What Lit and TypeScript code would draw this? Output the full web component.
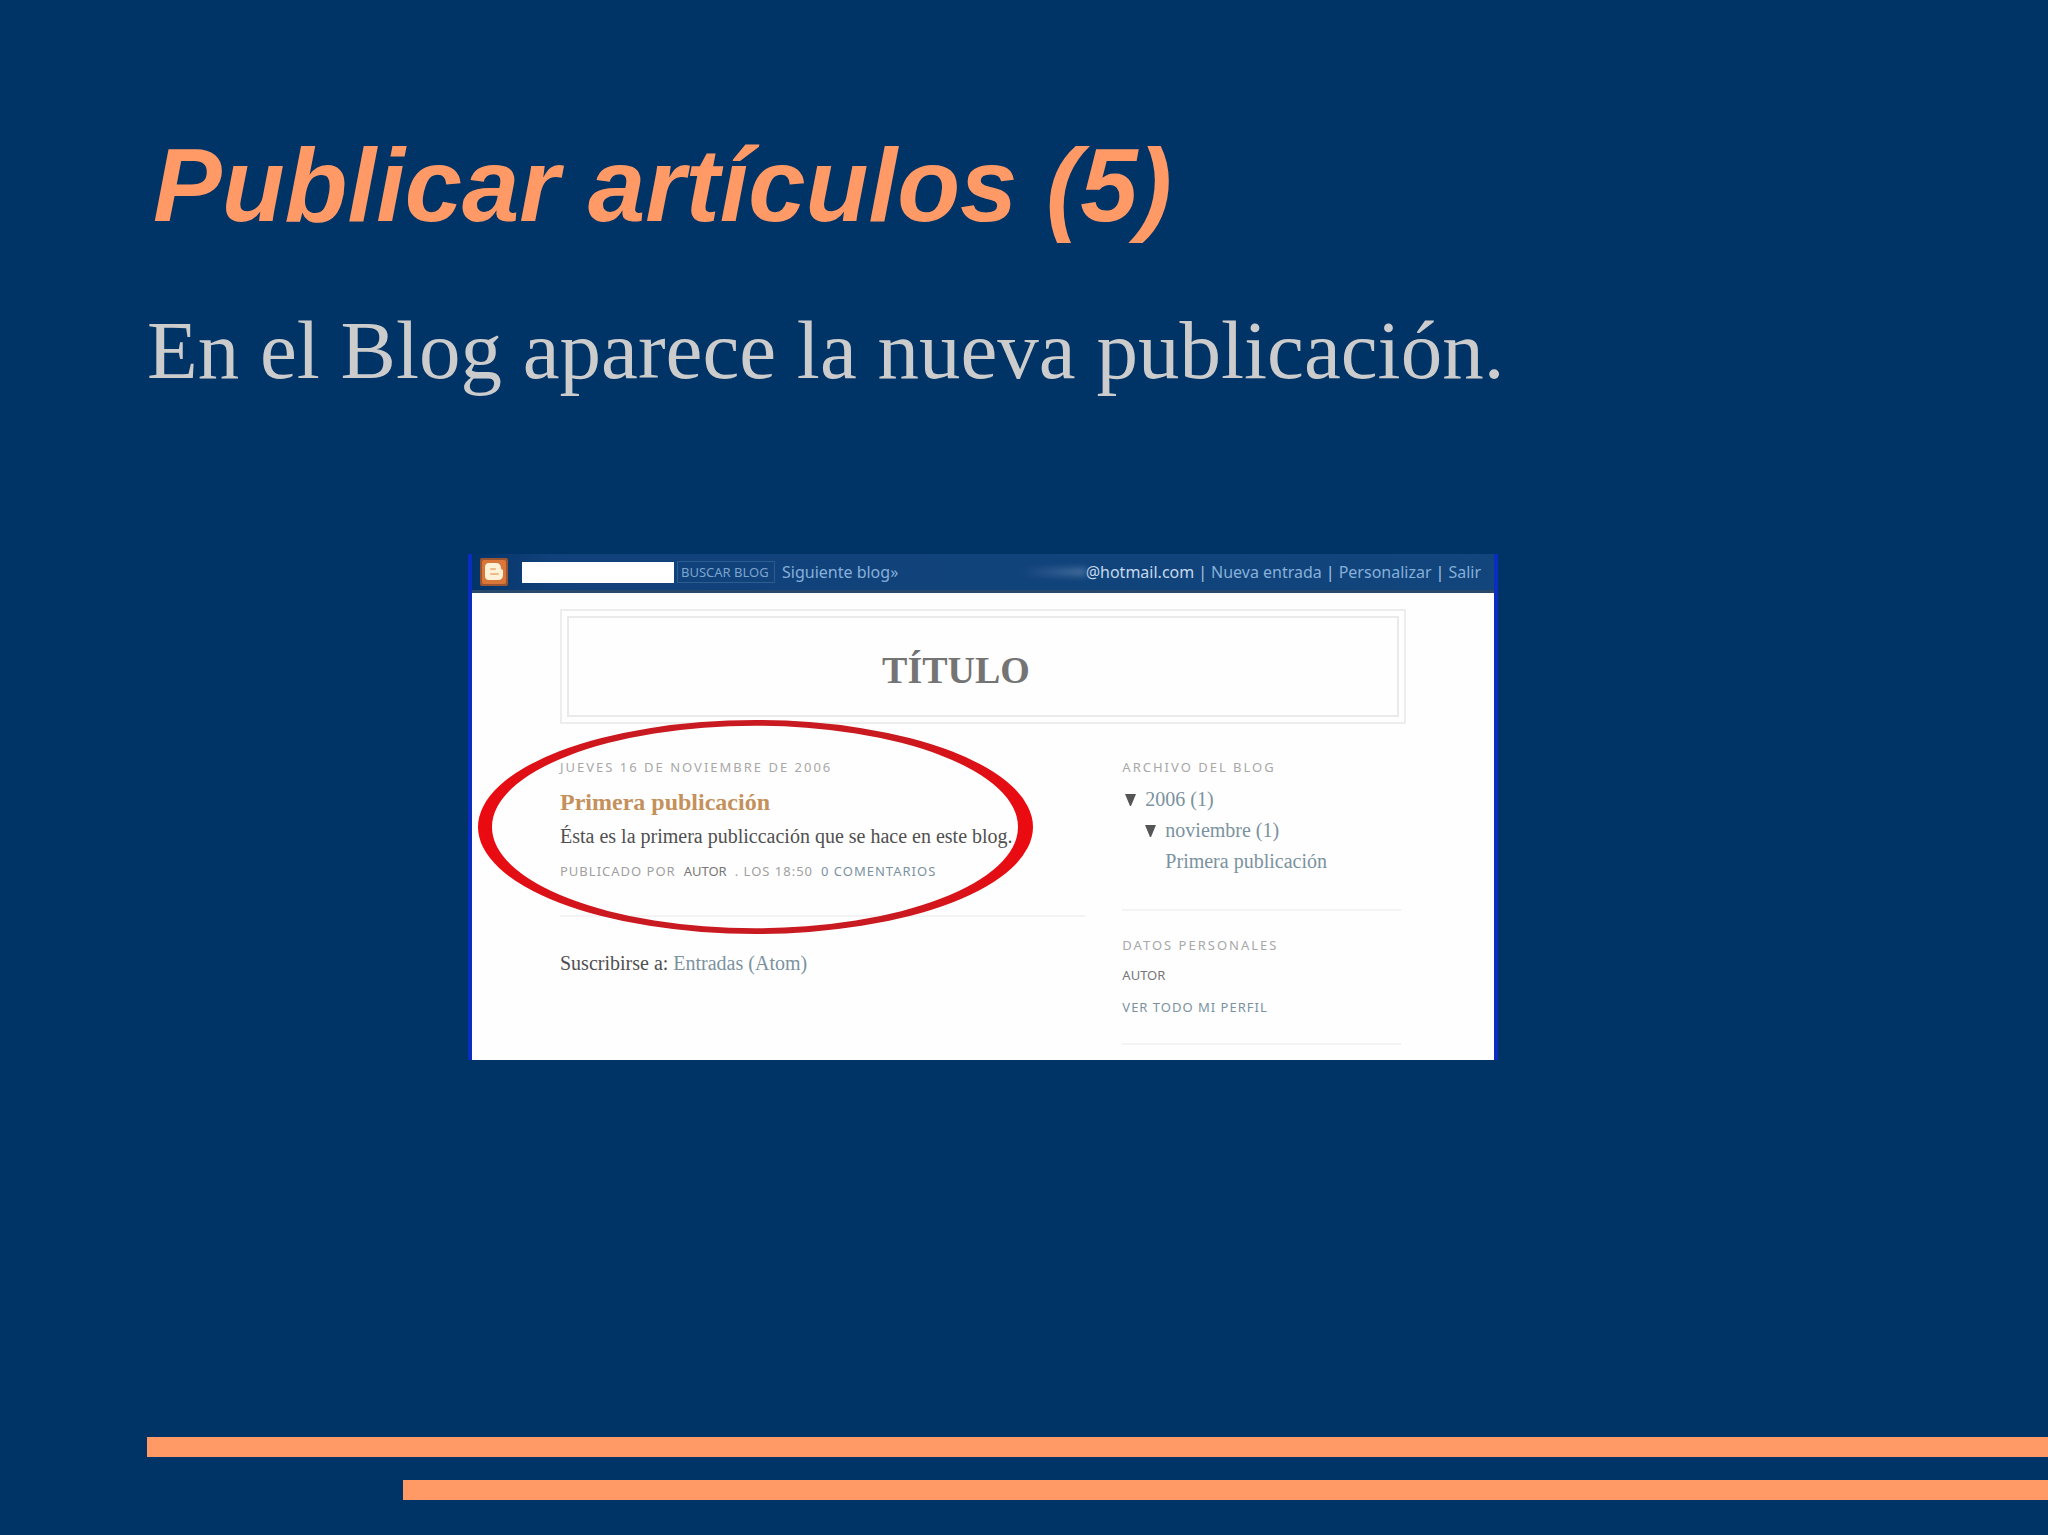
import { LitElement, html, css } from "lit";
import { customElement } from "lit/decorators.js";

@customElement("blog-navbar")
class BlogNavbar extends LitElement {
  static styles = css`
    :host { display: block; }
    .bar {
      box-sizing: border-box;
      height: 39px;
      display: flex;
      align-items: center;
      padding: 0 13px 0 8px;
      background: linear-gradient(90deg, #033468 0, #11417a 80px, #11457c 100%);
      border-bottom: 3px solid #29496b;
      font: 16px/20px "Noto Sans", sans-serif;
      color: #86b0da;
    }
    .logo { width: 28px; height: 28px; margin-right: 14px; flex: none; }
    .search { display: flex; align-items: center; gap: 3px; }
    .field {
      box-sizing: border-box;
      width: 152px;
      height: 21px;
      padding: 0 4px;
      border: 0;
      background: #fff;
      font: inherit;
    }
    .go {
      box-sizing: border-box;
      width: 98px;
      height: 22px;
      padding: 0 3px;
      border: 1px solid #2d5c90;
      background: none;
      color: #7ba4cf;
      font: 13px/20px "Noto Sans", sans-serif;
      text-align: left;
      white-space: nowrap;
    }
    a { color: inherit; text-decoration: none; }
    .next { margin-left: 7px; }
    .user { display: flex; align-items: center; gap: 4px; margin-left: auto; }
    .mail { display: flex; align-items: center; color: #c5d9ee; }
    .hidden-name {
      width: 64px;
      height: 8px;
      background: linear-gradient(90deg, transparent, #4a71a0);
      filter: blur(3px);
    }
    .sep { color: #a9c6e4; }
  `;

  render() {
    return html`
      <nav class="bar">
        <svg class="logo" viewBox="0 0 28 28" aria-hidden="true">
          <rect width="28" height="28" rx="2" fill="#9a5432" />
          <rect x="2" y="2" width="24" height="24" rx="2" fill="#d9773a" />
          <path fill="#fff0d8" d="M9 5h7c3 0 5 2 5 5 0 1 1 2 2 2v5c0 3-2 5-5 5H9c-3 0-4-2-4-4V9c0-2 1-4 4-4z" />
          <path d="M11 11h4M11 16h7" stroke="#f0b988" stroke-width="2" stroke-linecap="round" />
        </svg>
        <form class="search" @submit=${(e: Event) => e.preventDefault()}>
          <input class="field" type="text" aria-label="Buscar" />
          <button class="go" type="submit">BUSCAR BLOG</button>
        </form>
        <a class="next" href="#">Siguiente blog»</a>
        <div class="user">
          <span class="mail"><span class="hidden-name"></span>@hotmail.com</span>
          <span class="sep">|</span>
          <a href="#">Nueva entrada</a>
          <span class="sep">|</span>
          <a href="#">Personalizar</a>
          <span class="sep">|</span>
          <a href="#">Salir</a>
        </div>
      </nav>
    `;
  }
}

@customElement("blog-page")
class BlogPage extends LitElement {
  static styles = css`
    :host { display: block; }
    .page {
      position: relative;
      box-sizing: border-box;
      min-height: 506px;
      border: solid #0a2cc0;
      border-width: 0 4px;
      background: #fefefe;
      font: 20px/24px "Liberation Serif", serif;
      color: #505050;
    }
    .content { padding: 16px 88px 0; }
    .banner {
      border: 2px solid #ededed;
      padding: 5px;
    }
    .banner-inner {
      box-sizing: border-box;
      height: 101px;
      display: flex;
      align-items: center;
      justify-content: center;
      padding: 6px 54px 0 0;
      border: 2px solid #eaeaea;
    }
    h2, h3, h4, p, ul { margin: 0; padding: 0; }
    h2 { font-size: 38px; line-height: 44px; color: #747474; }
    .columns {
      display: grid;
      grid-template-columns: 526fr 279fr;
      gap: 37px;
      padding: 33px 5px 0 0;
    }
    a { color: #7b929e; text-decoration: none; }
    .label {
      font: 13px/20px "Noto Sans", sans-serif;
      letter-spacing: 2px;
      color: #a8a8a8;
      white-space: nowrap;
    }
    h3 { margin-top: 11px; font-size: 24px; line-height: 28px; color: #c4915c; }
    .text { margin-top: 8px; white-space: nowrap; }
    .meta {
      display: flex;
      gap: 8px;
      margin-top: 13px;
      font: 13px/20px "Noto Sans", sans-serif;
      letter-spacing: 1px;
      color: #a0a0a0;
      white-space: nowrap;
    }
    .author { letter-spacing: 0; color: #777; }
    .rule { height: 2px; border: 0; margin: 0; background: #f3f3f5; }
    .post { padding-bottom: 34px; }
    .subscribe { margin-top: 34px; }
    ul { list-style: none; }
    .tree { margin-top: 7px; padding-bottom: 32px; line-height: 31px; }
    .node { display: flex; align-items: center; gap: 9px; padding-left: 3px; }
    .node .arrow { width: 11px; height: 12px; fill: #555; }
    .level2 { padding-left: 23px; }
    .leaf { padding-left: 43px; }
    .profile { padding: 24px 0 26px; }
    .name, .link { font: 13px/20px "Noto Sans", sans-serif; }
    .name { margin-top: 10px; color: #777; }
    .link { margin-top: 12px; letter-spacing: 1px; }
    .ring {
      position: absolute;
      left: 5px;
      top: 165px;
      width: 557px;
      height: 216px;
      pointer-events: none;
    }
  `;

  private arrow() {
    return html`<svg class="arrow" viewBox="0 0 11 12" aria-hidden="true"><path d="M0 0h11L6 12H5z" /></svg>`;
  }

  render() {
    return html`
      <article class="page">
        <blog-navbar></blog-navbar>
        <div class="content">
          <header class="banner"><div class="banner-inner"><h2>TÍTULO</h2></div></header>
          <div class="columns">
            <main>
              <section class="post">
                <h4 class="label">JUEVES 16 DE NOVIEMBRE DE 2006</h4>
                <h3>Primera publicación</h3>
                <p class="text">Ésta es la primera publiccación que se hace en este blog.</p>
                <div class="meta">
                  <span>PUBLICADO POR</span><span class="author">AUTOR</span>
                  <span>. LOS 18:50</span><a href="#">0 COMENTARIOS</a>
                </div>
              </section>
              <hr class="rule" />
              <p class="subscribe">Suscribirse a: <a href="#">Entradas (Atom)</a></p>
            </main>
            <aside>
              <h4 class="label">ARCHIVO DEL BLOG</h4>
              <ul class="tree">
                <li class="node">${this.arrow()}<a href="#">2006 (1)</a></li>
                <li class="node level2">${this.arrow()}<a href="#">noviembre (1)</a></li>
                <li class="leaf"><a href="#">Primera publicación</a></li>
              </ul>
              <hr class="rule" />
              <section class="profile">
                <h4 class="label">DATOS PERSONALES</h4>
                <p class="name">AUTOR</p>
                <p class="link"><a href="#">VER TODO MI PERFIL</a></p>
              </section>
              <hr class="rule" />
            </aside>
          </div>
        </div>
        <svg class="ring" viewBox="0 0 558 216" preserveAspectRatio="none" aria-hidden="true">
          <defs>
            <linearGradient id="ring-fill">
              <stop offset="0" stop-color="#ec0a10" />
              <stop offset="0.25" stop-color="#c81a20" />
              <stop offset="0.75" stop-color="#c81a20" />
              <stop offset="1" stop-color="#ec0a10" />
            </linearGradient>
          </defs>
          <path fill="url(#ring-fill)" fill-rule="evenodd"
            d="M1 108a278 107 0 1 1 556 0a278 107 0 1 1 -556 0zM15 108a263 101 0 1 0 527 0a263 101 0 1 0 -527 0z" />
        </svg>
      </article>
    `;
  }
}

@customElement("app-root")
class AppRoot extends LitElement {
  static styles = css`
    :host { display: block; }
    .slide {
      box-sizing: border-box;
      min-height: 100vh;
      display: flex;
      flex-direction: column;
      padding: 124px 0 35px 147px;
      background: #003366;
    }
    h1 {
      margin: 0;
      padding-left: 6px;
      font: italic bold 103px/124px "Liberation Sans", sans-serif;
      color: #ff9966;
    }
    .lead {
      margin: 55px 0 0;
      font: 83px/94px "Liberation Serif", serif;
      color: #cccccc;
    }
    .figure { width: 1030px; max-width: 100%; margin: 157px 0 0 321px; }
    .bars { display: grid; gap: 23px; margin-top: auto; }
    .stripe { height: 20px; background: #ff9966; }
    .short { margin-left: 256px; }
  `;

  render() {
    return html`
      <section class="slide">
        <h1>Publicar artículos (5)</h1>
        <p class="lead">En el Blog aparece la nueva publicación.</p>
        <blog-page class="figure"></blog-page>
        <div class="bars">
          <div class="stripe"></div>
          <div class="stripe short"></div>
        </div>
      </section>
    `;
  }
}
